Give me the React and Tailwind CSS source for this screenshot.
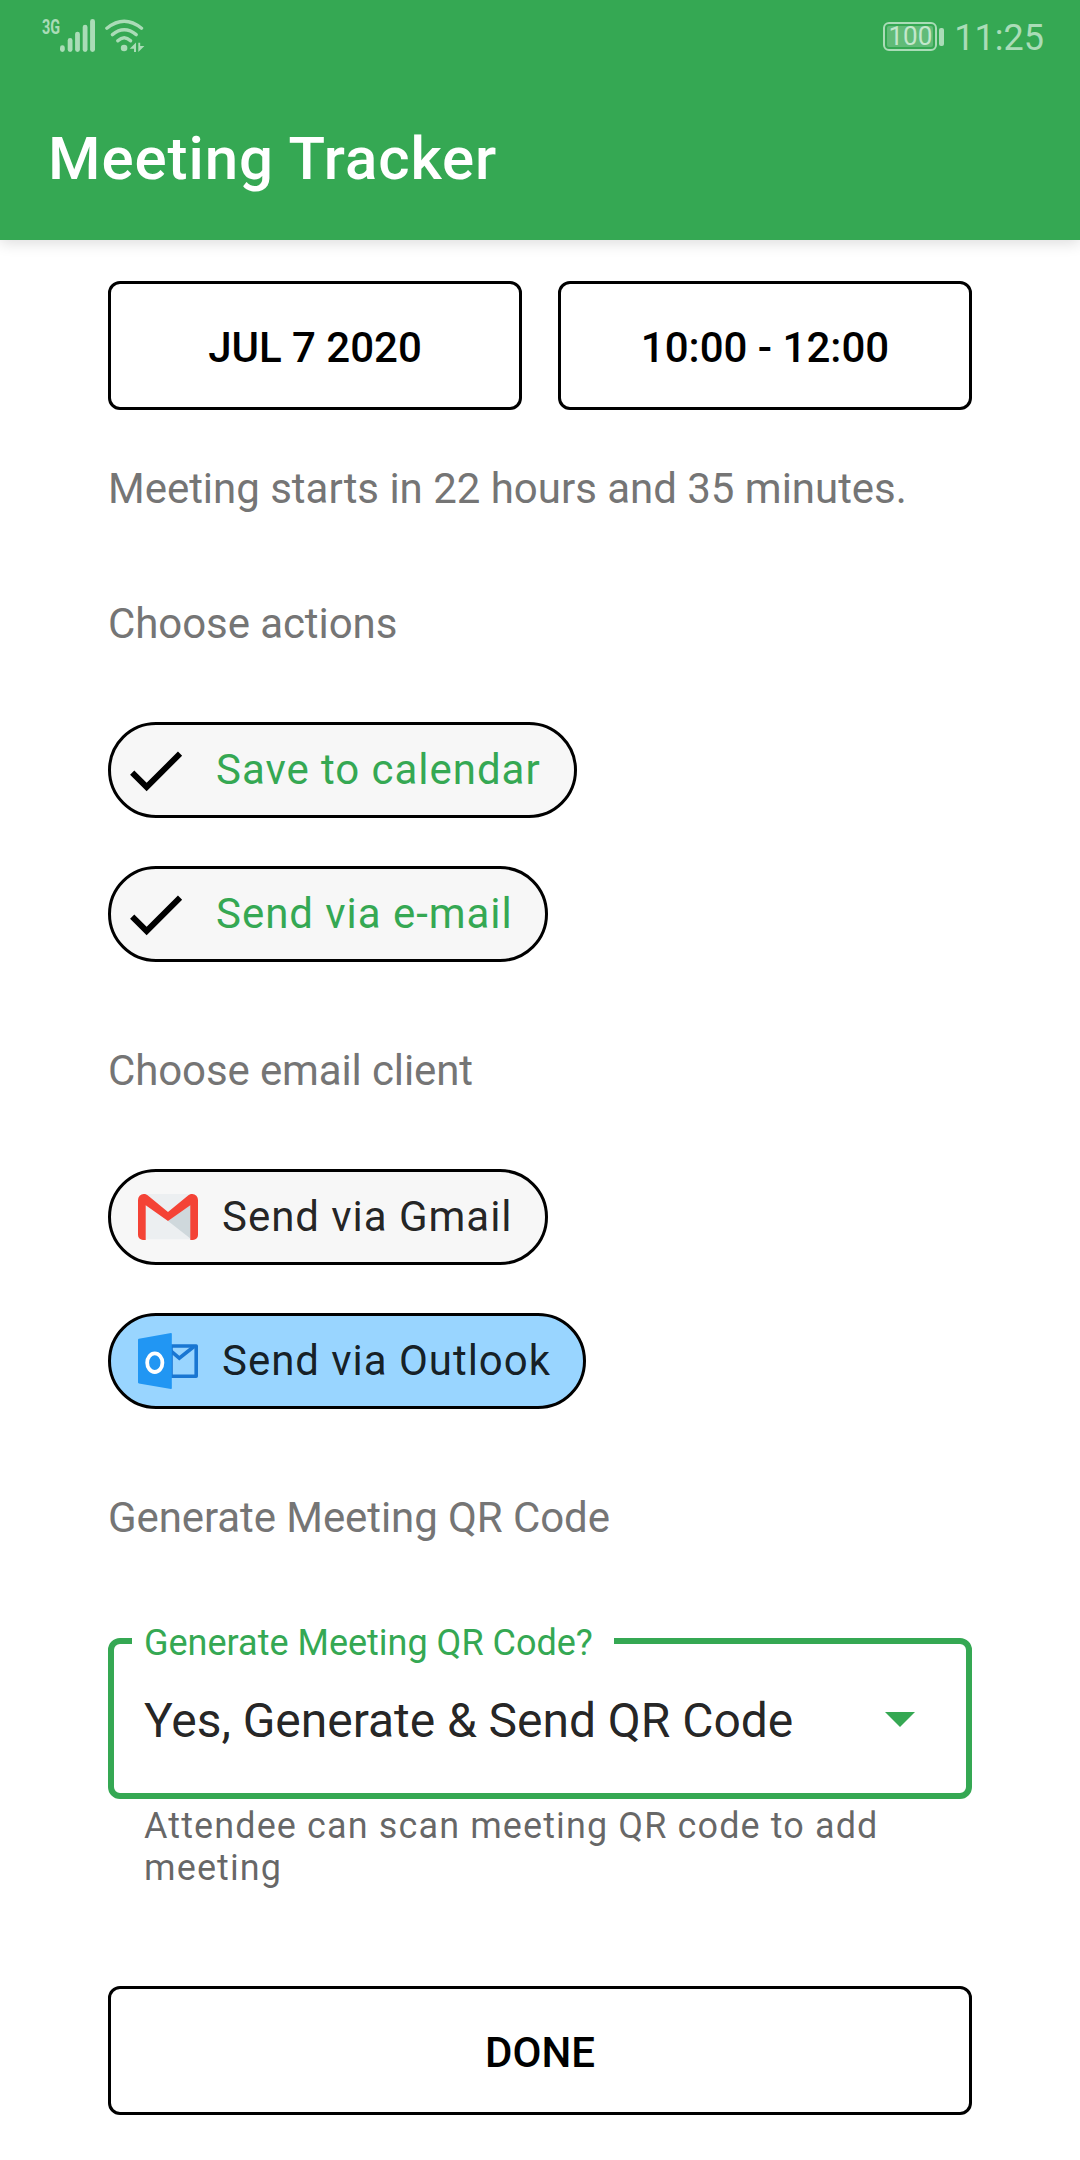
function SignalIcon() {
  return (
    <svg className="mt-[19px] h-[33px] w-[35px] fill-current" viewBox="0 0 35 33">
      <rect x="0" y="26.3" width="4.8" height="6.7" rx="2.4" />
      <rect x="7.7" y="19" width="4.8" height="14" rx="2.4" />
      <rect x="15.1" y="12.7" width="4.8" height="20.3" rx="2.4" />
      <rect x="22.7" y="5.7" width="4.8" height="27.3" rx="2.4" />
      <rect x="30.1" y="0" width="4.9" height="33" rx="2.4" />
    </svg>
  );
}

function WifiIcon() {
  return (
    <svg className="mt-[18px] ml-[9px] h-[36px] w-[42px]" viewBox="0 0 42 36" fill="none">
      <g stroke="currentColor" strokeWidth="3.4" strokeLinecap="round">
        <path d="M2.9 10.3Q20.2 -3.7 37.5 10.3" />
        <path d="M8.4 16.6Q20.2 6.8 32.2 16.6" />
        <path d="M13.8 22.8Q20.2 16.6 26.6 22.8" />
      </g>
      <circle cx="20.1" cy="30" r="3.3" fill="currentColor" />
      <path d="M25.7 30.8 32 24.6V34H30V30.8ZM34.3 34V24.8H36.2V28H40.4Z" fill="currentColor" />
    </svg>
  );
}

function StatusBar() {
  return (
    <div className="flex h-[72px] items-start justify-between pr-9 pl-[42px] text-[#aadcb7]">
      <div className="flex items-start">
        <span className="mt-[15px] w-[18px] origin-left scale-x-[0.72] text-[20px] leading-[24px] font-bold">
          3G
        </span>
        <SignalIcon />
        <WifiIcon />
      </div>
      <div className="flex items-start">
        <div className="mt-[22px] flex h-[29px] w-[54px] rounded-[6px] border-2 border-current p-[2px]">
          <span className="flex flex-1 items-center justify-center rounded-[2px] bg-white/22 text-[26px] leading-[21px] text-[#c3e7cc]">
            100
          </span>
        </div>
        <span className="mt-[28px] ml-[2px] h-[18px] w-[5px] rounded-[2px] bg-current" />
        <span className="mt-[17px] ml-[10px] text-[36px] leading-[42px]">11:25</span>
      </div>
    </div>
  );
}

function OutlineButton({ children }) {
  return (
    <button className="flex h-[129px] flex-1 items-center justify-center rounded-[12px] border-[3px] border-black pt-1 text-[42px] leading-[49px] font-medium text-black">
      {children}
    </button>
  );
}

function SectionLabel({ className, children }) {
  return (
    <p className={`text-[42px] leading-[49px] text-[#757575] ${className}`}>{children}</p>
  );
}

function Chip({ className, icon, children }) {
  return (
    <div
      className={`flex h-[96px] items-center rounded-full border-[3px] border-black pb-px text-[42px] leading-[49px] tracking-[0.96px] whitespace-nowrap ${className}`}
    >
      {icon}
      {children}
    </div>
  );
}

function CheckIcon() {
  return (
    <svg className="mt-px mr-[25px] ml-[9px] size-[71px] shrink-0" viewBox="0 0 24 24">
      <path d="M9 16.17 4.83 12l-1.42 1.41L9 19 21 7l-1.41-1.41z" />
    </svg>
  );
}

function GmailIcon() {
  return (
    <svg className="mt-px mr-6 ml-[27px] h-[46px] w-[60px] shrink-0" viewBox="0 0 60 46">
      <path fill="#eceff1" d="M5 0H55V45.3H5Z" />
      <path fill="#cfd8dc" d="M53 10 30 27 53 45Z" />
      <path
        fill="#f44336"
        d="M0 6A6 6 0 0 1 5.7 0C7.3 0 8.4.4 9.6 1.2L30 18 50.4 1.2C51.6.4 52.7 0 54.3 0A6 6 0 0 1 60 6V41A5 5 0 0 1 55 46H52.3V11.3L30 27 7.7 11.3V46H5A5 5 0 0 1 0 41Z"
      />
    </svg>
  );
}

function OutlookIcon() {
  return (
    <svg className="mt-px mr-6 ml-[27px] h-[56px] w-[60px] shrink-0" viewBox="0 0 60 56" fill="none">
      <path stroke="#1976d2" strokeWidth="3.6" strokeLinejoin="round" d="M33 13H58.2V43.2H33Z" />
      <path stroke="#1976d2" strokeWidth="3.6" d="M32.5 17.7 41.3 25.2 56 13.5" />
      <path fill="#2196f3" d="M0 6.8Q0 6 .9 5.8L33 0Q33.8 0 33.8.8V55.2Q33.8 56 33 56L.9 50.4Q0 50.2 0 49.3Z" />
      <ellipse cx="16.8" cy="29.7" rx="7.6" ry="9.3" stroke="#fff" strokeWidth="3.8" />
    </svg>
  );
}

function QrSelect() {
  return (
    <div className="relative mt-[96px] flex h-[161px] items-center justify-between rounded-[12px] border-[6px] border-[#35a853] pt-1 pr-[51px] pl-[30px]">
      <span className="absolute -top-[22px] left-[18px] w-[482px] bg-white pl-3 text-[36px] leading-[42px] whitespace-nowrap text-[#35a853]">
        Generate Meeting QR Code?
      </span>
      <span className="text-[48px] leading-[57px] tracking-[-0.04px] whitespace-nowrap text-black/87">
        Yes, Generate &amp; Send QR Code
      </span>
      <svg className="mb-[2px] h-[15px] w-[30px]" viewBox="0 0 30 15">
        <path fill="#35a853" d="M0 0H30L15 15Z" />
      </svg>
    </div>
  );
}

export default function App() {
  return (
    <div className="h-[2160px] w-[1080px] overflow-hidden bg-white font-['Roboto',sans-serif]">
      <header className="h-[240px] bg-[#35a853] shadow-[0_3px_14px_rgba(0,0,0,0.14)]">
        <StatusBar />
        <h1 className="mt-[51px] ml-12 text-[60px] leading-[71px] font-medium tracking-[0.93px] text-white">
          Meeting Tracker
        </h1>
      </header>

      <main className="flex flex-col px-[108px] pt-[41px]">
        <div className="flex gap-9">
          <OutlineButton>JUL 7 2020</OutlineButton>
          <OutlineButton>10:00 - 12:00</OutlineButton>
        </div>
        <SectionLabel className="mt-[54px] tracking-[-0.02px] whitespace-nowrap">
          Meeting starts in 22 hours and 35 minutes.
        </SectionLabel>

        <SectionLabel className="mt-[86px] tracking-[-0.08px]">Choose actions</SectionLabel>
        <div className="mt-[74px] flex flex-col gap-12">
          <Chip className="w-[469px] bg-[#f7f7f7] text-[#35a853]" icon={<CheckIcon />}>
            Save to calendar
          </Chip>
          <Chip className="w-[440px] bg-[#f7f7f7] text-[#35a853]" icon={<CheckIcon />}>
            Send via e-mail
          </Chip>
        </div>

        <SectionLabel className="mt-[84px] tracking-[-0.12px]">Choose email client</SectionLabel>
        <div className="mt-[74px] flex flex-col gap-12">
          <Chip className="w-[440px] bg-[#f7f7f7] text-black/87" icon={<GmailIcon />}>
            Send via Gmail
          </Chip>
          <Chip className="w-[478px] bg-[#99d5ff] text-black/87" icon={<OutlookIcon />}>
            Send via Outlook
          </Chip>
        </div>

        <SectionLabel className="mt-[84px] tracking-[-0.08px]">Generate Meeting QR Code</SectionLabel>
        <QrSelect />
        <p className="mt-[6px] px-9 text-[36px] leading-[42px] tracking-[1.11px] text-black/60">
          Attendee can scan meeting QR code to add meeting
        </p>

        <div className="mt-[97px] flex">
          <OutlineButton>DONE</OutlineButton>
        </div>
      </main>
    </div>
  );
}
